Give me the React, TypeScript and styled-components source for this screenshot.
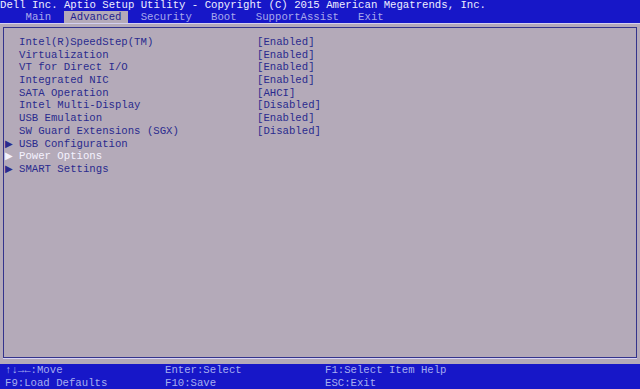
import React from "react";
import styled, { createGlobalStyle } from "styled-components";

const GlobalStyle = createGlobalStyle`
  html, body {
    margin: 0;
    padding: 0;
    background: #b4aab9;
    overflow: hidden;
  }
`;

const Screen = styled.div`
  width: 640px;
  height: 389px;
  display: flex;
  flex-direction: column;
  font-family: "Liberation Mono", "DejaVu Sans Mono", monospace;
  font-size: 10.67px;
  background: #b4aab9;
`;

const TitleBar = styled.div`
  height: 23px;
  background: #1717c8;
  display: flex;
  flex-direction: column;
`;

const Title = styled.div`
  height: 11px;
  line-height: 10px;
  color: #eeeeff;
  white-space: pre;
`;

const Tabs = styled.div`
  height: 12px;
  display: flex;
  gap: 6.4px;
  padding-left: 19.2px;
`;

const Tab = styled.div<{ $active?: boolean }>`
  padding: 0 6.4px;
  line-height: 12px;
  color: ${(p) => (p.$active ? "#1e1e90" : "#a9a9ec")};
  background: ${(p) => (p.$active ? "#b4aab9" : "transparent")};
`;

const Panel = styled.div`
  flex: 1;
  border-top: 1px solid #d4d0f0;
  padding: 3px 3px 6px 3px;
  display: flex;
`;

const Frame = styled.div`
  flex: 1;
  border: 1px solid #34348c;
  box-shadow: 0 1px 0 #d8d4f4;
  padding: 8px 0 0 1px;
`;

const Row = styled.div<{ $selected?: boolean }>`
  display: flex;
  height: 12.7px;
  line-height: 12.7px;
  white-space: pre;
  color: ${(p) => (p.$selected ? "#f4f2ff" : "#2a2a8e")};
`;

const Arrow = styled.span`
  width: 14px;
  font-size: 10px;
  padding-left: 0;
  box-sizing: border-box;
  font-family: "DejaVu Sans", sans-serif;
`;

const Label = styled.span`
  width: 238px;
`;

const Value = styled.span``;

const Footer = styled.div`
  height: 25px;
  background: #1717c8;
  display: grid;
  grid-template-columns: 160px 160px 160px;
  grid-auto-rows: 12.5px;
  padding-left: 5px;
  line-height: 12.5px;
  color: #a6aef0;
  white-space: pre;
`;

const settings = [
  { label: "Intel(R)SpeedStep(TM)", value: "[Enabled]" },
  { label: "Virtualization", value: "[Enabled]" },
  { label: "VT for Direct I/O", value: "[Enabled]" },
  { label: "Integrated NIC", value: "[Enabled]" },
  { label: "SATA Operation", value: "[AHCI]" },
  { label: "Intel Multi-Display", value: "[Disabled]" },
  { label: "USB Emulation", value: "[Enabled]" },
  { label: "SW Guard Extensions (SGX)", value: "[Disabled]" },
];

const submenus = ["USB Configuration", "Power Options", "SMART Settings"];

const tabs = ["Main", "Advanced", "Security", "Boot", "SupportAssist", "Exit"];

const hints = [
  "↑↓→←:Move",
  "Enter:Select",
  "F1:Select Item Help",
  "F9:Load Defaults",
  "F10:Save",
  "ESC:Exit",
];

export default function App() {
  return (
    <>
      <GlobalStyle />
      <Screen>
        <TitleBar>
          <Title>
            Dell Inc. Aptio Setup Utility - Copyright (C) 2015 American
            Megatrends, Inc.
          </Title>
          <Tabs>
            {tabs.map((t) => (
              <Tab key={t} $active={t === "Advanced"}>
                {t}
              </Tab>
            ))}
          </Tabs>
        </TitleBar>
        <Panel>
          <Frame>
            {settings.map((s) => (
              <Row key={s.label}>
                <Arrow />
                <Label>{s.label}</Label>
                <Value>{s.value}</Value>
              </Row>
            ))}
            {submenus.map((m) => (
              <Row key={m} $selected={m === "Power Options"}>
                <Arrow>▶</Arrow>
                <Label>{m}</Label>
              </Row>
            ))}
          </Frame>
        </Panel>
        <Footer>
          {hints.map((h) => (
            <span key={h}>{h}</span>
          ))}
        </Footer>
      </Screen>
    </>
  );
}
